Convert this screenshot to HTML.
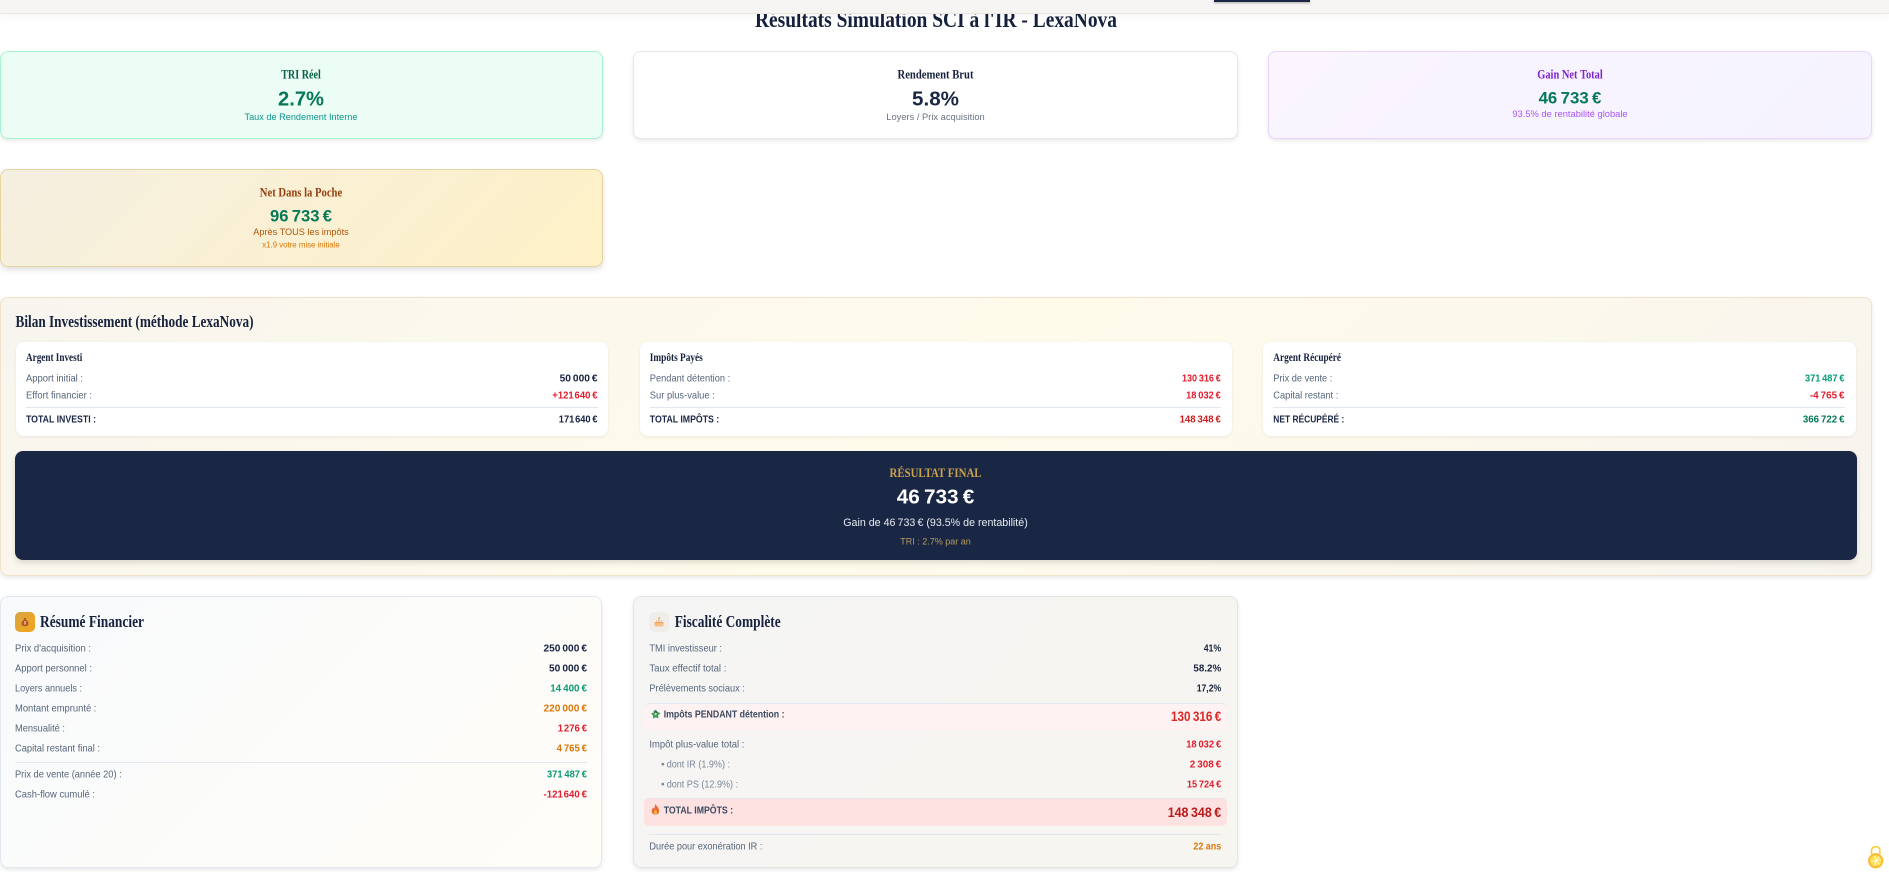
<!DOCTYPE html>
<html lang="fr">
<head>
<meta charset="utf-8">
<title>Résultats Simulation SCI à l'IR - LexaNova</title>
<style>
html,body{margin:0;padding:0;background:#fff;width:1889px;height:872px;overflow:hidden}
.b{position:absolute;box-sizing:border-box}
.card{border-radius:8px;box-shadow:0 2px 4px rgba(0,0,0,.09)}
.inner{background:#fff;border-radius:8px;box-shadow:0 1px 3px rgba(0,0,0,.07)}
svg.t{position:absolute;left:0;top:0;width:1889px;height:872px;z-index:2;filter:blur(.3px)}
svg.t text{font-family:"Liberation Sans",sans-serif;font-size:10.4px;fill:#55657a}
svg.t .s{font-family:"Liberation Serif",serif;font-weight:700;fill:#16223d}
svg.t .v{font-weight:700;text-anchor:end;fill:#16223d}
svg.t .m{text-anchor:middle}
svg.t .r{fill:#e11d2e}.g{fill:#0a9b76 !important}.o{fill:#d97706 !important}
.bar{position:absolute;left:0;top:0;width:1889px;height:14px;background:#f6f5f3;border-bottom:1px solid #ebe7df;box-sizing:border-box;box-shadow:0 4px 8px rgba(0,0,0,.03);z-index:3}
.tab{position:absolute;left:1214px;top:0;width:96px;height:2px;background:#1a2744;box-shadow:0 1px 2px rgba(0,0,0,.35)}
</style>
</head>
<body>
<div class="bar"><div class="tab"></div></div>

<div class="b card" style="left:0;top:51px;width:603px;height:88px;background:#ecfdf5;border:1px solid #a7f3d0"></div>
<div class="b card" style="left:633px;top:51px;width:604.5px;height:88px;background:#fff;border:1px solid #e8e8e8"></div>
<div class="b card" style="left:1268px;top:51px;width:603.5px;height:88px;background:linear-gradient(135deg,#faf5ff,#f5f3ff);border:1px solid #e9d5ff"></div>
<div class="b card" style="left:0;top:169px;width:603px;height:98px;background:linear-gradient(135deg,#f5efe1,#fef1c6);border:1px solid #e6d5a3;box-shadow:0 3px 6px rgba(0,0,0,.12)"></div>

<div class="b card" style="left:0;top:297px;width:1871.5px;height:279px;background:linear-gradient(135deg,#f8f5ee,#fffbeb 50%,#f7f4ee);border:1px solid #eee3c9"></div>
<div class="b inner" style="left:16px;top:342px;width:592px;height:94px"></div>
<div class="b inner" style="left:640px;top:342px;width:592px;height:94px"></div>
<div class="b inner" style="left:1263px;top:342px;width:593px;height:94px"></div>
<div class="b" style="left:26px;top:407px;width:572px;height:1px;background:#e2e8f0"></div>
<div class="b" style="left:650px;top:407px;width:571px;height:1px;background:#e2e8f0"></div>
<div class="b" style="left:1273px;top:407px;width:572px;height:1px;background:#e2e8f0"></div>
<div class="b" style="left:15px;top:451px;width:1842px;height:109px;background:#1a2744;border-radius:8px;box-shadow:0 3px 6px rgba(0,0,0,.12)"></div>

<div class="b card" style="left:0;top:596px;width:602px;height:272px;background:linear-gradient(135deg,#f8fafc,#fffdf8);border:1px solid #e2e8f0"></div>
<div class="b" style="left:15px;top:612px;width:20px;height:20px;border-radius:5px;background:linear-gradient(135deg,#d9a441,#f2a71b)"></div>
<svg class="b" style="left:15px;top:612px;z-index:2" width="20" height="20" viewBox="0 0 20 20"><path d="M8.6 6h2.8l-.6 1.6c1.8.9 2.7 2.5 2.7 4.2 0 1.7-1.4 2.4-3.5 2.4s-3.5-.7-3.5-2.4c0-1.7.9-3.3 2.7-4.2z" fill="#b5562a"/><rect x="9.4" y="9" width="1.2" height="3.6" fill="#f3d9a0"/></svg>
<div class="b" style="left:15px;top:762px;width:572px;height:1px;background:#e2e8f0"></div>

<div class="b card" style="left:633px;top:596px;width:604.5px;height:272px;background:linear-gradient(135deg,#f5f5f5,#f7f5f0);border:1px solid #e5e5e5"></div>
<div class="b" style="left:649px;top:612px;width:20px;height:20px;border-radius:5px;background:#efedea"></div>
<svg class="b" style="left:649px;top:612px;z-index:2" width="20" height="20" viewBox="0 0 20 20"><rect x="5.5" y="10" width="9" height="4.5" rx="1" fill="#f6bf8a"/><rect x="5.5" y="10" width="9" height="1.3" fill="#f4a460"/><rect x="9.5" y="6.6" width="1" height="3.4" fill="#e8a06a"/><circle cx="10" cy="5.8" r=".9" fill="#f59e42"/><rect x="7" y="8" width=".8" height="2" fill="#eeb78c"/><rect x="12.2" y="8" width=".8" height="2" fill="#eeb78c"/></svg>

<div class="b" style="left:644px;top:703px;width:583px;height:27px;background:#fef2f2;border-top:1px solid #e2e8f0;border-radius:5px"></div>
<div class="b" style="left:644px;top:798px;width:583px;height:28px;background:#fee2e2;border-top:1px solid #e8e4ea;border-radius:5px"></div>
<div class="b" style="left:649px;top:834px;width:572px;height:1px;background:#dfe7f0"></div>

<svg class="t" viewBox="0 0 1889 872" xmlns="http://www.w3.org/2000/svg">
<text class="s m" x="936" y="27" style="font-size:23px" textLength="362" lengthAdjust="spacingAndGlyphs">Résultats Simulation SCI à l'IR - LexaNova</text>

<text class="s m" x="301" y="78.7" style="font-size:12.5px;fill:#065f46" textLength="39.6" lengthAdjust="spacingAndGlyphs">TRI Réel</text>
<text class="m" x="301" y="105.3" style="font-size:20px;font-weight:700;fill:#047857" textLength="46" lengthAdjust="spacingAndGlyphs">2.7%</text>
<text class="m" x="301" y="120" style="font-size:9.6px;fill:#0d9488" textLength="113" lengthAdjust="spacingAndGlyphs">Taux de Rendement Interne</text>

<text class="s m" x="935.5" y="78.7" style="font-size:12.5px" textLength="76" lengthAdjust="spacingAndGlyphs">Rendement Brut</text>
<text class="m" x="935.5" y="105.3" style="font-size:20px;font-weight:700;fill:#1a2744" textLength="47" lengthAdjust="spacingAndGlyphs">5.8%</text>
<text class="m" x="935.5" y="120" style="font-size:9.6px;fill:#6b7280" textLength="98.4" lengthAdjust="spacingAndGlyphs">Loyers / Prix acquisition</text>

<text class="s m" x="1570" y="78.7" style="font-size:12.5px;fill:#7e22ce" textLength="65.6" lengthAdjust="spacingAndGlyphs">Gain Net Total</text>
<text class="m" x="1570" y="103.3" style="font-size:17px;font-weight:700;fill:#047857" textLength="62.8" lengthAdjust="spacingAndGlyphs">46&#8201;733&#8201;€</text>
<text class="m" x="1570" y="117" style="font-size:9.6px;fill:#a855f7" textLength="115.3" lengthAdjust="spacingAndGlyphs">93.5% de rentabilité globale</text>

<text class="s m" x="301" y="196.7" style="font-size:12.5px;fill:#92400e" textLength="82.4" lengthAdjust="spacingAndGlyphs">Net Dans la Poche</text>
<text class="m" x="301" y="221.7" style="font-size:17px;font-weight:700;fill:#047857" textLength="62" lengthAdjust="spacingAndGlyphs">96&#8201;733&#8201;€</text>
<text class="m" x="301" y="235" style="font-size:9.6px;fill:#b45309" textLength="95.5" lengthAdjust="spacingAndGlyphs">Après TOUS les impôts</text>
<text class="m" x="301" y="247.7" style="font-size:8px;fill:#d97706" textLength="77.5" lengthAdjust="spacingAndGlyphs">x1.9 votre mise initiale</text>

<text class="s" x="15.5" y="327" style="font-size:16.5px" textLength="238" lengthAdjust="spacingAndGlyphs">Bilan Investissement (méthode LexaNova)</text>

<text class="s" x="26" y="361" style="font-size:11.2px" textLength="56.3" lengthAdjust="spacingAndGlyphs">Argent Investi</text>
<text x="26" y="381.6" textLength="57" lengthAdjust="spacingAndGlyphs">Apport initial :</text>
<text x="26" y="398.6" textLength="66" lengthAdjust="spacingAndGlyphs">Effort financier :</text>
<text x="26" y="422.3" style="font-weight:700;fill:#1a2744" textLength="70" lengthAdjust="spacingAndGlyphs">TOTAL INVESTI :</text>
<text class="v" x="597.6" y="381.6" textLength="38" lengthAdjust="spacingAndGlyphs">50&#8201;000&#8201;€</text>
<text class="v r" x="597.6" y="398.6" textLength="45.3" lengthAdjust="spacingAndGlyphs">+121&#8202;640&#8201;€</text>
<text class="v" x="597.6" y="422.3" textLength="38.8" lengthAdjust="spacingAndGlyphs">171&#8202;640&#8201;€</text>

<text class="s" x="649.8" y="361" style="font-size:11.2px" textLength="53" lengthAdjust="spacingAndGlyphs">Impôts Payés</text>
<text x="649.8" y="381.6" textLength="80.4" lengthAdjust="spacingAndGlyphs">Pendant détention :</text>
<text x="649.8" y="398.6" textLength="65" lengthAdjust="spacingAndGlyphs">Sur plus-value :</text>
<text x="649.8" y="422.3" style="font-weight:700;fill:#1a2744" textLength="69.4" lengthAdjust="spacingAndGlyphs">TOTAL IMPÔTS :</text>
<text class="v r" x="1220.8" y="381.6" textLength="38.8" lengthAdjust="spacingAndGlyphs">130&#8201;316&#8201;€</text>
<text class="v r" x="1220.8" y="398.6" textLength="34.7" lengthAdjust="spacingAndGlyphs">18&#8201;032&#8201;€</text>
<text class="v" x="1220.8" y="422.3" style="fill:#c81e1e" textLength="41.2" lengthAdjust="spacingAndGlyphs">148&#8201;348&#8201;€</text>

<text class="s" x="1273.3" y="361" style="font-size:11.2px" textLength="67.7" lengthAdjust="spacingAndGlyphs">Argent Récupéré</text>
<text x="1273.3" y="381.6" textLength="59" lengthAdjust="spacingAndGlyphs">Prix de vente :</text>
<text x="1273.3" y="398.6" textLength="65" lengthAdjust="spacingAndGlyphs">Capital restant :</text>
<text x="1273.3" y="422.3" style="font-weight:700;fill:#1a2744" textLength="71" lengthAdjust="spacingAndGlyphs">NET RÉCUPÉRÉ :</text>
<text class="v g" x="1844.5" y="381.6" textLength="39.5" lengthAdjust="spacingAndGlyphs">371&#8201;487&#8201;€</text>
<text class="v r" x="1844.5" y="398.6" textLength="34.6" lengthAdjust="spacingAndGlyphs">-4&#8201;765&#8201;€</text>
<text class="v" x="1844.5" y="422.3" style="fill:#047857" textLength="41.6" lengthAdjust="spacingAndGlyphs">366&#8201;722&#8201;€</text>

<text class="s m" x="935.5" y="477" style="font-size:12.8px;fill:#c9a24d" textLength="92" lengthAdjust="spacingAndGlyphs">RÉSULTAT FINAL</text>
<text class="m" x="935.5" y="503.3" style="font-size:20.5px;font-weight:700;fill:#fff" textLength="77.5" lengthAdjust="spacingAndGlyphs">46&#8201;733&#8201;€</text>
<text class="m" x="935.5" y="526" style="font-size:11px;fill:#e6ebf2" textLength="184.5" lengthAdjust="spacingAndGlyphs">Gain de 46&#8201;733&#8201;€ (93.5% de rentabilité)</text>
<text class="m" x="935.5" y="544.6" style="font-size:9.6px;fill:#b89b5e" textLength="70.6" lengthAdjust="spacingAndGlyphs">TRI : 2.7% par an</text>

<text class="s" x="40" y="627" style="font-size:17px" textLength="104" lengthAdjust="spacingAndGlyphs">Résumé Financier</text>
<text x="15" y="651.4" textLength="76" lengthAdjust="spacingAndGlyphs">Prix d'acquisition :</text>
<text x="15" y="671.6" textLength="77" lengthAdjust="spacingAndGlyphs">Apport personnel :</text>
<text x="15" y="691.6" textLength="67" lengthAdjust="spacingAndGlyphs">Loyers annuels :</text>
<text x="15" y="711.6" textLength="81.4" lengthAdjust="spacingAndGlyphs">Montant emprunté :</text>
<text x="15" y="731.6" textLength="50" lengthAdjust="spacingAndGlyphs">Mensualité :</text>
<text x="15" y="751.6" textLength="85" lengthAdjust="spacingAndGlyphs">Capital restant final :</text>
<text x="15" y="777.4" textLength="106.7" lengthAdjust="spacingAndGlyphs">Prix de vente (année 20) :</text>
<text x="15" y="797.4" textLength="80" lengthAdjust="spacingAndGlyphs">Cash-flow cumulé :</text>
<text class="v" x="587" y="651.4" textLength="43.5" lengthAdjust="spacingAndGlyphs">250&#8201;000&#8201;€</text>
<text class="v" x="587" y="671.6" textLength="38" lengthAdjust="spacingAndGlyphs">50&#8201;000&#8201;€</text>
<text class="v g" x="587" y="691.6" textLength="36.8" lengthAdjust="spacingAndGlyphs">14&#8201;400&#8201;€</text>
<text class="v o" x="587" y="711.6" textLength="43.5" lengthAdjust="spacingAndGlyphs">220&#8201;000&#8201;€</text>
<text class="v r" x="587" y="731.6" textLength="29.2" lengthAdjust="spacingAndGlyphs">1&#8202;276&#8201;€</text>
<text class="v o" x="587" y="751.6" textLength="30.4" lengthAdjust="spacingAndGlyphs">4&#8201;765&#8201;€</text>
<text class="v g" x="587" y="777.4" textLength="40" lengthAdjust="spacingAndGlyphs">371&#8201;487&#8201;€</text>
<text class="v r" x="587" y="797.4" textLength="43.5" lengthAdjust="spacingAndGlyphs">-121&#8202;640&#8201;€</text>

<text class="s" x="674.7" y="627" style="font-size:17px" textLength="106" lengthAdjust="spacingAndGlyphs">Fiscalité Complète</text>
<text x="649.4" y="651.4" textLength="72.6" lengthAdjust="spacingAndGlyphs">TMI investisseur :</text>
<text x="649.4" y="671.6" textLength="77" lengthAdjust="spacingAndGlyphs">Taux effectif total :</text>
<text x="649.4" y="691.6" textLength="95.5" lengthAdjust="spacingAndGlyphs">Prélèvements sociaux :</text>
<text class="v" x="1221.2" y="651.4" textLength="17.5" lengthAdjust="spacingAndGlyphs">41%</text>
<text class="v" x="1221.2" y="671.6" textLength="27.8" lengthAdjust="spacingAndGlyphs">58.2%</text>
<text class="v" x="1221.2" y="691.6" textLength="24.5" lengthAdjust="spacingAndGlyphs">17,2%</text>

<text x="663.7" y="717.6" style="font-weight:700;fill:#3b4a60" textLength="120.8" lengthAdjust="spacingAndGlyphs">Impôts PENDANT détention :</text>
<text class="v r" x="1221.2" y="720.8" style="font-size:13.5px;fill:#dc2626" textLength="50.2" lengthAdjust="spacingAndGlyphs">130&#8201;316&#8201;€</text>

<text x="649.4" y="747.6" textLength="95" lengthAdjust="spacingAndGlyphs">Impôt plus-value total :</text>
<text x="661" y="767.6" style="fill:#7a8798">•</text>
<text x="666.7" y="767.6" style="fill:#7a8798" textLength="63.3" lengthAdjust="spacingAndGlyphs">dont IR (1.9%) :</text>
<text x="661" y="787.6" style="fill:#7a8798">•</text>
<text x="666.7" y="787.6" style="fill:#7a8798" textLength="71.4" lengthAdjust="spacingAndGlyphs">dont PS (12.9%) :</text>
<text class="v r" x="1221.2" y="747.6" textLength="35" lengthAdjust="spacingAndGlyphs">18&#8201;032&#8201;€</text>
<text class="v r" x="1221.2" y="767.6" textLength="31.4" lengthAdjust="spacingAndGlyphs">2&#8201;308&#8201;€</text>
<text class="v r" x="1221.2" y="787.6" textLength="34.3" lengthAdjust="spacingAndGlyphs">15&#8201;724&#8201;€</text>

<text x="663.7" y="813.4" style="font-weight:700;fill:#3b4a60" textLength="69.4" lengthAdjust="spacingAndGlyphs">TOTAL IMPÔTS :</text>
<text class="v" x="1221.2" y="816.8" style="font-size:13.5px;fill:#b91c1c" textLength="53.5" lengthAdjust="spacingAndGlyphs">148&#8201;348&#8201;€</text>

<text x="649.4" y="849.6" textLength="113" lengthAdjust="spacingAndGlyphs">Durée pour exonération IR :</text>
<text class="v o" x="1221.2" y="849.6" textLength="27.8" lengthAdjust="spacingAndGlyphs">22 ans</text>

<g transform="translate(651,709)">
<path d="M4 0.5l2.6 2.6L9.5 4 7 6.5 7.5 9.4 4.6 8.2 2 9.6 2.2 6.6 0 4.4 2.8 3.6z" fill="#2f9e5f"/>
<path d="M2.6 2.2l2.6-1 1.6 2-2 2.2-2-1.2z" fill="#1f7a6b"/>
<circle cx="4.6" cy="5" r="1.2" fill="#f1d36b"/>
</g>
<g transform="translate(651.5,804)">
<path d="M4 0c.6 2 3.6 3.6 3.6 7 0 2.4-1.6 3.6-3.6 3.6S.2 9.4.2 7.2C.2 5.4 1.2 4.4 1.8 3.4c.3.8.6 1.2 1 1.4C3.2 3.4 3.2 1.6 4 0z" fill="#ee6a2c"/>
<path d="M4 5.4c.4 1 1.6 1.6 1.6 3 0 1.2-.8 2-1.6 2s-1.7-.8-1.7-1.9c0-1.3 1.3-1.8 1.7-3.1z" fill="#f9b24a"/>
</g>
<g transform="translate(1868,846)">
<path d="M3.5 8V4.5C3.5 2 5.2.8 7.7.8s4.2 1.2 4.2 3.7V8" fill="none" stroke="#f9cf3a" stroke-width="1.6"/>
<circle cx="7.7" cy="14.7" r="7.6" fill="#fbbc2c"/>
<circle cx="7.7" cy="14.7" r="5.6" fill="#ffdc52"/>
<path d="M7.7 14.7l4 4M7.7 14.7l5-1M7.7 14.7l-1 5M7.7 14.7l-4.6 1.4M7.7 14.7l-1-5M7.7 14.7l3.4-3.6" stroke="#fffbe0" stroke-width="1"/>
</g>
</svg>
</body>
</html>
